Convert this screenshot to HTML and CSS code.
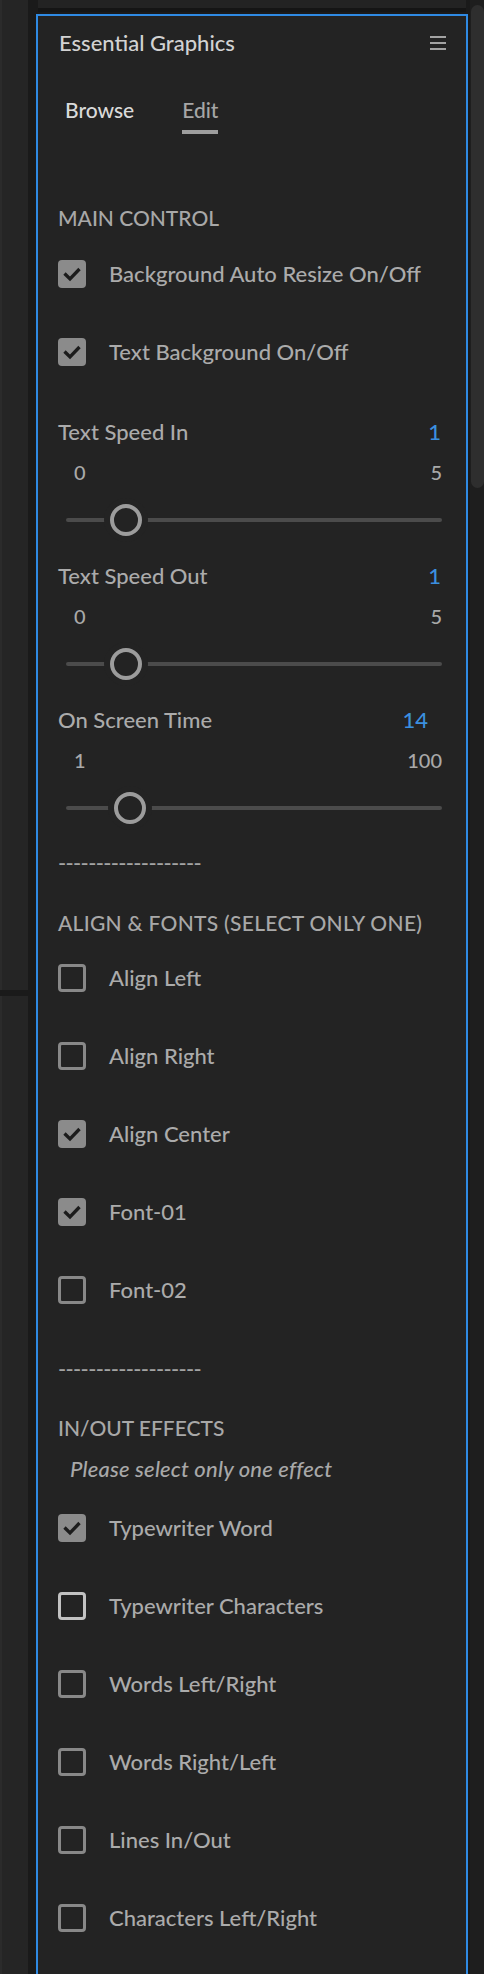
FILE: index.html
```html
<!DOCTYPE html>
<html lang="en">
<head>
<meta charset="utf-8">
<title>Essential Graphics</title>
<link rel="stylesheet" href="styles.css">
</head>
<body>
<div class="app">
  <div class="side">
    <div class="side-top"></div>
    <div class="side-divider"></div>
    <div class="side-bottom"></div>
  </div>
  <div class="main">
    <div class="topbar"><div class="topbar-light"></div><div class="topbar-dark"></div></div>
    <section class="panel">
      <header class="panel-head">
        <h1 class="panel-title">Essential Graphics</h1>
        <svg class="menu-icon" width="16" height="14" viewBox="0 0 16 14" aria-hidden="true">
          <rect x="0" y="0.2" width="16" height="1.6" fill="#c4c4c4"/>
          <rect x="0" y="6.2" width="16" height="1.6" fill="#c4c4c4"/>
          <rect x="0" y="12.2" width="16" height="1.6" fill="#c4c4c4"/>
        </svg>
      </header>
      <nav class="tabs">
        <span class="tab">Browse</span>
        <span class="tab tab-active">Edit</span>
      </nav>

      <h2 class="section-title first">MAIN CONTROL</h2>
      <div class="checklist">
        <label class="check-row"><span class="box checked"><svg viewBox="0 0 28 28"><path d="M6.5 13.5 L12 19 L21.5 9"/></svg></span><span class="check-label">Background Auto Resize On/Off</span></label>
        <label class="check-row"><span class="box checked"><svg viewBox="0 0 28 28"><path d="M6.5 13.5 L12 19 L21.5 9"/></svg></span><span class="check-label">Text Background On/Off</span></label>
      </div>

      <div class="slider-block first-slider">
        <div class="slider-head"><span class="slider-name">Text Speed In</span><span class="slider-val">1</span></div>
        <div class="slider-range"><span>0</span><span>5</span></div>
        <div class="slider"><span class="knob" style="left:44px"></span></div>
      </div>
      <div class="slider-block">
        <div class="slider-head"><span class="slider-name">Text Speed Out</span><span class="slider-val">1</span></div>
        <div class="slider-range"><span>0</span><span>5</span></div>
        <div class="slider"><span class="knob" style="left:44px"></span></div>
      </div>
      <div class="slider-block">
        <div class="slider-head"><span class="slider-name">On Screen Time</span><span class="slider-val val-inset">14</span></div>
        <div class="slider-range"><span>1</span><span>100</span></div>
        <div class="slider"><span class="knob" style="left:48px"></span></div>
      </div>

      <div class="dashes dashes-a">-------------------</div>

      <h2 class="section-title align-title">ALIGN &amp; FONTS (SELECT ONLY ONE)</h2>
      <div class="checklist list-align">
        <label class="check-row"><span class="box"></span><span class="check-label">Align Left</span></label>
        <label class="check-row"><span class="box"></span><span class="check-label">Align Right</span></label>
        <label class="check-row"><span class="box checked"><svg viewBox="0 0 28 28"><path d="M6.5 13.5 L12 19 L21.5 9"/></svg></span><span class="check-label">Align Center</span></label>
        <label class="check-row"><span class="box checked"><svg viewBox="0 0 28 28"><path d="M6.5 13.5 L12 19 L21.5 9"/></svg></span><span class="check-label">Font-01</span></label>
        <label class="check-row"><span class="box"></span><span class="check-label">Font-02</span></label>
      </div>

      <div class="dashes dashes-b">-------------------</div>

      <h2 class="section-title effects-title">IN/OUT EFFECTS</h2>
      <p class="hint">Please select only one effect</p>
      <div class="checklist list-effects">
        <label class="check-row"><span class="box checked"><svg viewBox="0 0 28 28"><path d="M6.5 13.5 L12 19 L21.5 9"/></svg></span><span class="check-label">Typewriter Word</span></label>
        <label class="check-row"><span class="box hover"></span><span class="check-label">Typewriter Characters</span></label>
        <label class="check-row"><span class="box"></span><span class="check-label">Words Left/Right</span></label>
        <label class="check-row"><span class="box"></span><span class="check-label">Words Right/Left</span></label>
        <label class="check-row"><span class="box"></span><span class="check-label">Lines In/Out</span></label>
        <label class="check-row"><span class="box"></span><span class="check-label">Characters Left/Right</span></label>
      </div>
    </section>
  </div>
  <div class="scroll"><div class="scroll-thumb"></div></div>
</div>
</body>
</html>
```

FILE: styles.css
```css
html, body {
  margin: 0;
  padding: 0;
  background: #1a1a1a;
  width: 484px;
  height: 1974px;
  overflow: hidden;
}

body {
  font-family: Lato, "Open Sans", "DejaVu Sans", sans-serif;
  font-weight: 500;
  color: #ababab;
}

.app {
  display: flex;
  width: 484px;
  height: 1974px;
}

/* left partial panel */
.side {
  width: 28px;
  display: flex;
  flex-direction: column;
  margin-right: 8px;
}
.side-top {
  height: 990px;
  background: #252525;
  border-left: 2px solid #2b2b2b;
  box-sizing: border-box;
}
.side-divider {
  height: 6px;
  background: #1a1a1a;
}
.side-bottom {
  flex: 1;
  background: #252525;
  border-left: 2px solid #2b2b2b;
}

/* main panel column */
.main {
  width: 432px;
  display: flex;
  flex-direction: column;
  margin-right: 2px;
}
.topbar {
  height: 14px;
  padding: 0 2px;
}
.topbar-light {
  height: 8px;
  background: #232323;
}
.topbar-dark {
  height: 4px;
  background: #151515;
}

.panel {
  flex: 1;
  background: #232323;
  border: 2px solid #2f8ae3;
  border-bottom: none;
  padding: 13px 20px 0 20px;
  display: flex;
  flex-direction: column;
}

.panel-head {
  display: flex;
  align-items: center;
  justify-content: space-between;
  height: 28px;
}
.panel-title {
  margin: 0 0 0 1px;
  font-size: 22px;
  line-height: 28px;
  font-weight: 500;
  color: #d2d2d2;
}
.menu-icon {
  display: block;
}

.tabs {
  display: flex;
  gap: 48px;
  margin-top: 39px;
  padding-left: 7px;
}
.tab {
  font-size: 21px;
  line-height: 28px;
  color: #dadada;
  padding-bottom: 6px;
  border-bottom: 4px solid transparent;
}
.tab-active {
  color: #a6a6a6;
  border-bottom-color: #9e9e9e;
}

.section-title {
  margin: 0;
  font-size: 21px;
  line-height: 28px;
  font-weight: 500;
  color: #a8a8a8;
}
.section-title.first {
  margin-top: 70px;
}

.checklist {
  display: flex;
  flex-direction: column;
  gap: 50px;
  margin-top: 28px;
}
.check-row {
  display: flex;
  align-items: center;
  gap: 23px;
  height: 28px;
}
.box {
  width: 28px;
  height: 28px;
  box-sizing: border-box;
  border: 3px solid #888888;
  border-radius: 4px;
  flex: none;
}
.box.hover {
  border-color: #c2c2c2;
}
.box.checked {
  background: #8b8b8b;
  border: none;
}
.box svg {
  display: block;
  width: 28px;
  height: 28px;
}
.box svg path {
  fill: none;
  stroke: #1c1c1c;
  stroke-width: 3.3;
}
.check-label {
  font-size: 22px;
  line-height: 28px;
  color: #ababab;
  white-space: nowrap;
}

/* sliders */
.slider-block {
  display: flex;
  flex-direction: column;
  margin-top: 26px;
}
.slider-block.first-slider {
  margin-top: 52px;
}
.slider-head {
  display: flex;
  justify-content: space-between;
  font-size: 22px;
  line-height: 28px;
  padding-right: 5px;
}
.slider-name {
  color: #ababab;
}
.slider-val {
  color: #3b8fdf;
}
.slider-val.val-inset {
  margin-right: 13px;
}
.slider-range {
  display: flex;
  justify-content: space-between;
  margin-top: 14px;
  padding: 0 4px 0 16px;
  font-size: 20px;
  line-height: 24px;
  color: #a9a9a9;
}
.slider {
  position: relative;
  height: 32px;
  margin: 20px 4px 0 8px;
}
.slider::before {
  content: "";
  position: absolute;
  left: 0;
  right: 0;
  top: 14px;
  height: 4px;
  background: #4b4b4b;
  border-radius: 2px;
}
.knob {
  position: absolute;
  top: 0;
  width: 32px;
  height: 32px;
  box-sizing: border-box;
  border: 4px solid #9c9c9c;
  border-radius: 50%;
  background: #232323;
  box-shadow: 0 0 0 6px #232323;
}

.dashes {
  font-size: 22px;
  line-height: 28px;
  color: #a3a3a3;
  letter-spacing: -0.65px;
}
.dashes-a {
  margin-top: 25px;
}
.align-title {
  margin-top: 32px;
  letter-spacing: 0.3px;
}
.list-align {
  margin-top: 27px;
}
.dashes-b {
  margin-top: 51px;
}
.effects-title {
  margin-top: 31px;
}
.hint {
  margin: 13px 0 0 0;
  padding-left: 12px;
  font-size: 22px;
  line-height: 28px;
  letter-spacing: 0.2px;
  font-style: italic;
  color: #a8a8a8;
}
.list-effects {
  margin-top: 31px;
}

/* scrollbar column */
.scroll {
  width: 14px;
  background: #1e1e1e;
  padding-top: 5px;
  box-sizing: border-box;
}
.scroll-thumb {
  height: 483px;
  margin-left: 1px;
  background: #2e2e2e;
  border-radius: 7px;
}
```
